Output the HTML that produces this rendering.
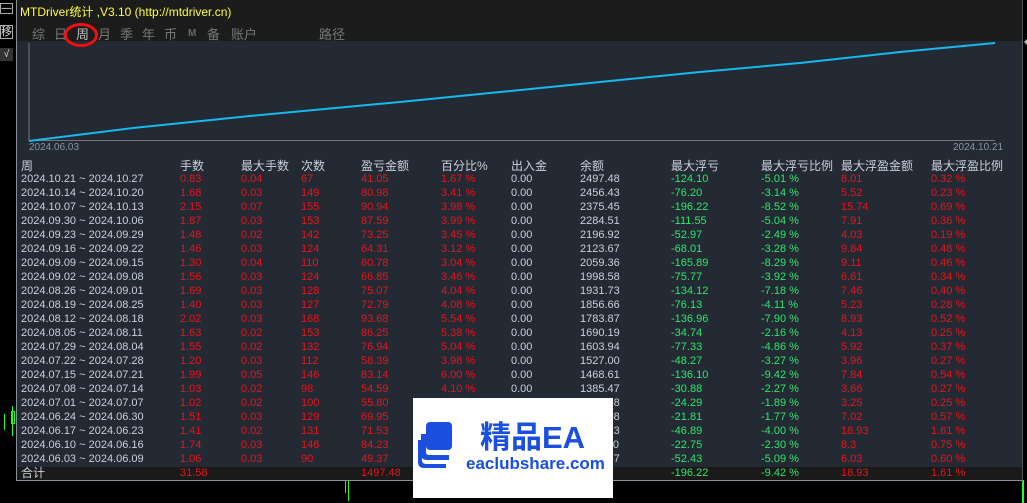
<!DOCTYPE html>
<html><head><meta charset="utf-8"><style>
*{margin:0;padding:0;box-sizing:border-box}
body{width:1027px;height:503px;background:#000;position:relative;overflow:hidden;font-family:"Liberation Sans","Noto Sans CJK SC",sans-serif;font-size:11px}
.a{position:absolute;white-space:nowrap}
.r{color:#e8141c}.g{color:#2ee66a}.w{color:#c8d0dc}
.row{position:absolute;left:0;height:14px;line-height:14px;width:1007px}
.row span{position:absolute}
</style></head><body>
<div class="a" style="left:0;top:0;width:16px;height:503px;background:#000"></div>
<div class="a" style="left:0;top:3px;width:13px;height:11px;border:1px solid #aaa;color:#fff;font-size:10px;line-height:9px;text-align:center">—</div>
<div class="a" style="left:0;top:25px;width:13px;height:14px;border:1px solid #aaa;color:#ddd;font-size:11px;line-height:12px">移</div>
<div class="a" style="left:0;top:48px;width:13px;height:13px;background:#333;color:#ddd;font-size:10px;line-height:13px;text-align:center">√</div>
<div class="a" style="left:0;top:406px;width:16px;height:30px">
<div class="a" style="left:4px;top:8px;width:1px;height:16px;background:#2f2"></div>
<div class="a" style="left:11px;top:5px;width:4px;height:13px;border:1px solid #2f2"></div>
<div class="a" style="left:12px;top:0;width:1px;height:30px;background:#2f2"></div></div>
<div class="a" style="left:345px;top:481px;width:1px;height:12px;background:#2f2"></div>
<div class="a" style="left:348px;top:481px;width:1px;height:20px;background:#2f2"></div>
<div class="a" style="left:1022px;top:480px;width:2px;height:23px;background:#2f2"></div>

<div class="a" style="left:16px;top:0;width:1007px;height:481px;background:#232a33;border-left:1px solid #8a9099;border-bottom:1px solid #8a9099;border-right:1px solid #555"></div>
<div class="a" style="left:17px;top:0;width:1005px;height:41px;background:#1c1c1c"></div>
<div class="a" style="left:20px;top:3px;color:#ffff33;font-size:12px">MTDriver统计 ,V3.10 (http://mtdriver.cn)</div>
<div class="a" style="left:32px;top:24px;color:#777;font-size:13px">综</div>
<div class="a" style="left:54px;top:24px;color:#777;font-size:13px">日</div>
<div class="a" style="left:76px;top:24px;color:#bbb;font-size:13px">周</div>
<div class="a" style="left:98px;top:24px;color:#777;font-size:13px">月</div>
<div class="a" style="left:120px;top:24px;color:#777;font-size:13px">季</div>
<div class="a" style="left:142px;top:24px;color:#777;font-size:13px">年</div>
<div class="a" style="left:164px;top:24px;color:#777;font-size:13px">币</div>
<div class="a" style="left:188px;top:28px;color:#667;font-size:10px;font-weight:bold">M</div>
<div class="a" style="left:207px;top:24px;color:#777;font-size:13px">备</div>
<div class="a" style="left:231px;top:24px;color:#777;font-size:13px">账户</div>
<div class="a" style="left:319px;top:24px;color:#777;font-size:13px">路径</div>
<div class="a" style="left:64px;top:23px;width:34px;height:24px;border:3px solid #f01010;border-radius:50%"></div>
<div class="a" style="left:1020px;top:38px;width:0;height:0;border:4px solid transparent;border-right-color:#bbb"></div>

<svg class="a" style="left:0;top:0" width="1027" height="160">
<line x1="29" y1="43" x2="29" y2="141" stroke="#777" stroke-width="1"/>
<line x1="29" y1="140.5" x2="995" y2="140.5" stroke="#777" stroke-width="1"/>
<polyline points="29,141 133,128 250,116 400,102 500,92 600,82 700,72 800,63 900,52 995,43" fill="none" stroke="#1ab8f0" stroke-width="2"/>
</svg>
<div class="a" style="left:29px;top:142px;color:#8a94a0;font-size:10px">2024.06.03</div>
<div class="a" style="left:953px;top:142px;color:#8a94a0;font-size:10px">2024.10.21</div>

<div id="t"></div>
<div class="a" style="left:17px;top:467px;width:1005px;height:13px;background:#1a1a1a"></div>
<div class="row w" style="top:466px;font-size:12px"><span style="left:21px">合计</span><span class="r" style="left:180px;font-size:11px">31.58</span><span class="r" style="left:361px;font-size:11px">1497.48</span><span class="g" style="left:671px;font-size:11px">-196.22</span><span class="g" style="left:761px;font-size:11px">-9.42 %</span><span class="r" style="left:841px;font-size:11px">18.93</span><span class="r" style="left:931px;font-size:11px">1.61 %</span></div>

<div class="a" style="left:413px;top:398px;width:200px;height:100px;background:#fff">
<svg class="a" style="left:5px;top:22px" width="40" height="50"><g fill="#1a4fe0"><rect x="8" y="2" width="26" height="28" rx="4"/><path d="M3 14 v20 q0 6 6 6 h22 v-5 h-20 q-3 0 -3-3 v-18z"/><path d="M0 20 v22 q0 6 6 6 h22 v-4 h-20 q-4 0 -4-4 v-20z"/></g></svg>
<div class="a" style="left:67px;top:14px;color:#1a4fe0;font-size:31px;font-weight:bold">精品EA</div>
<div class="a" style="left:53px;top:56px;color:#1a4fe0;font-size:17px;font-weight:bold">eaclubshare.com</div>
</div>
<script>
var H=['周','手数','最大手数','次数','盈亏金额','百分比%','出入金','余额','最大浮亏','最大浮亏比例','最大浮盈金额','最大浮盈比例'];
var X=[21,180,241,301,361,441,511,580,671,761,841,931];
var D=`10.21~10.27 0.83 0.04 67 41.05 1.67 2497.48 -124.10 -5.01 8.01 0.32
10.14~10.20 1.68 0.03 149 80.98 3.41 2456.43 -76.20 -3.14 5.52 0.23
10.07~10.13 2.15 0.07 155 90.94 3.98 2375.45 -196.22 -8.52 15.74 0.69
09.30~10.06 1.87 0.03 153 87.59 3.99 2284.51 -111.55 -5.04 7.91 0.36
09.23~09.29 1.48 0.02 142 73.25 3.45 2196.92 -52.97 -2.49 4.03 0.19
09.16~09.22 1.46 0.03 124 64.31 3.12 2123.67 -68.01 -3.28 9.84 0.48
09.09~09.15 1.30 0.04 110 60.78 3.04 2059.36 -165.89 -8.29 9.11 0.46
09.02~09.08 1.56 0.03 124 66.85 3.46 1998.58 -75.77 -3.92 6.61 0.34
08.26~09.01 1.69 0.03 128 75.07 4.04 1931.73 -134.12 -7.18 7.46 0.40
08.19~08.25 1.40 0.03 127 72.79 4.08 1856.66 -76.13 -4.11 5.23 0.28
08.12~08.18 2.02 0.03 168 93.68 5.54 1783.87 -136.96 -7.90 8.93 0.52
08.05~08.11 1.63 0.02 153 86.25 5.38 1690.19 -34.74 -2.16 4.13 0.25
07.29~08.04 1.55 0.02 132 76.94 5.04 1603.94 -77.33 -4.86 5.92 0.37
07.22~07.28 1.20 0.03 112 58.39 3.98 1527.00 -48.27 -3.27 3.96 0.27
07.15~07.21 1.99 0.05 146 83.14 6.00 1468.61 -136.10 -9.42 7.84 0.54
07.08~07.14 1.03 0.02 98 54.59 4.10 1385.47 -30.88 -2.27 3.66 0.27
07.01~07.07 1.02 0.02 100 55.80 4.19 1330.88 -24.29 -1.89 3.25 0.25
06.24~06.30 1.51 0.03 129 69.95 5.49 1275.08 -21.81 -1.77 7.02 0.57
06.17~06.23 1.41 0.02 131 71.53 5.94 1205.13 -46.89 -4.00 18.93 1.61
06.10~06.16 1.74 0.03 146 84.23 7.52 1133.60 -22.75 -2.30 8.3 0.75
06.03~06.09 1.06 0.03 90 49.37 4.61 1049.37 -52.43 -5.09 6.03 0.60`.split('\n');
var h='<div class="row w" style="top:159px;font-size:12px">';
H.forEach(function(s,i){h+='<span style="left:'+X[i]+'px">'+s+'</span>'});h+='</div>';
D.forEach(function(l,j){var c=l.split(' '),d=c[0].split('~');
var v=['2024.'+d[0]+' ~ 2024.'+d[1],c[1],c[2],c[3],c[4],c[5]+' %','0.00',c[6],c[7],c[8]+' %',c[9],c[10]+' %'];
var cl=['w','r','r','r','r','r','w','w','g','g','r','r'];
h+='<div class="row" style="top:'+(172+j*14)+'px">';
v.forEach(function(s,i){h+='<span class="'+cl[i]+'" style="left:'+X[i]+'px">'+s+'</span>'});h+='</div>';});
document.getElementById('t').innerHTML=h;
</script>
</body></html>
